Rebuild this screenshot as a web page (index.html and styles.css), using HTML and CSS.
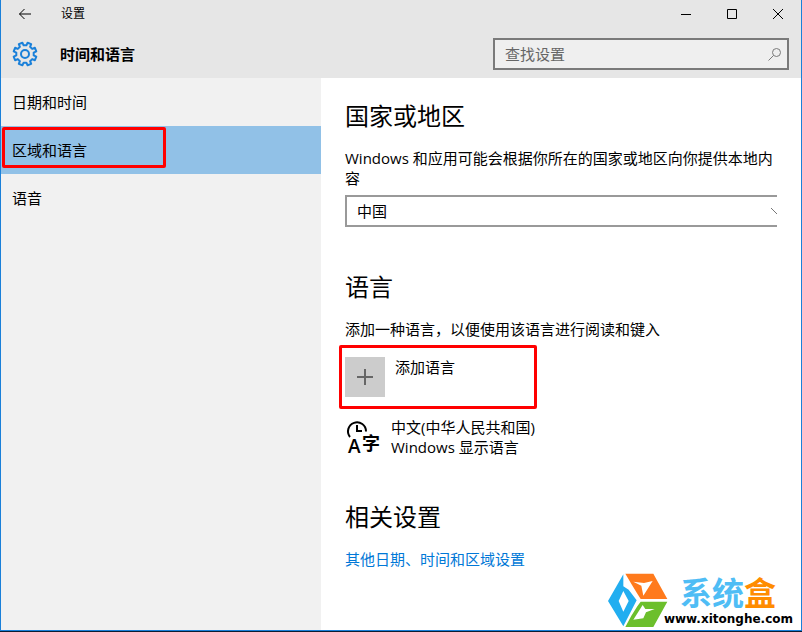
FILE: index.html
```
<!DOCTYPE html>
<html lang="zh-CN">
  <head>
    <meta charset="utf-8" />
    <title>设置</title>
    <meta name="viewport" content="width=device-width, initial-scale=1.0" />
    <link rel="stylesheet" href="styles.css">
  </head>
  <body>
    <div class="window">
      <header class="header">
        <div class="title-bar">
          <button class="icon-btn back" aria-label="返回">
            <svg width="14" height="12" viewBox="0 0 14 12"><path d="M13 6H1.5M6.5 1l-5 5 5 5" /></svg>
          </button>
          <span class="title">设置</span>
          <div class="window-controls">
            <button class="icon-btn" aria-label="最小化">
              <svg width="12" height="12" viewBox="0 0 12 12"><path d="M1 6.5h10" /></svg>
            </button>
            <button class="icon-btn" aria-label="最大化">
              <svg width="12" height="12" viewBox="0 0 12 12"><path d="M1.5 1.5h9v9h-9z" /></svg>
            </button>
            <button class="icon-btn" aria-label="关闭">
              <svg width="12" height="12" viewBox="0 0 12 12"><path d="M1 1l10 10M11 1L1 11" /></svg>
            </button>
          </div>
        </div>
        <div class="page-bar">
          <svg class="gear" width="26" height="26" viewBox="-13 -13 26 26">
            <path d="M1.4-8.7L2.6-11.3 6.2-9.9 5.1-7.2 7.2-5.1 9.9-6.2 11.3-2.6 8.7-1.4V1.4L11.3 2.6 9.9 6.2 7.2 5.1 5.1 7.2 6.2 9.9 2.6 11.3 1.4 8.7H-1.4L-2.6 11.3-6.2 9.9-5.1 7.2-7.2 5.1-9.9 6.2-11.3 2.6-8.7 1.4V-1.4L-11.3-2.6-9.9-6.2-7.2-5.1-5.1-7.2-6.2-9.9-2.6-11.3-1.4-8.7z" />
            <circle r="4" />
          </svg>
          <h1>时间和语言</h1>
          <div class="search">
            <input type="text" id="search" placeholder="查找设置" aria-label="查找设置" />
            <svg width="14" height="14" viewBox="0 0 14 14"><circle cx="8.5" cy="5.5" r="4" /><path d="M5.5 8.5l-5 5" /></svg>
          </div>
        </div>
      </header>

      <div class="body">
        <nav class="sidebar">
          <a href="#">日期和时间</a>
          <a href="#" class="active highlight">区域和语言</a>
          <a href="#">语音</a>
        </nav>

        <main class="content">
          <section>
            <h2>国家或地区</h2>
            <label for="country">Windows 和应用可能会根据你所在的国家或地区向你提供本地内容</label>
            <div class="select-box">
              <select id="country">
                <option>中国</option>
              </select>
              <svg width="6" height="6" viewBox="0 0 6 6"><path d="M0 0l6 6" /></svg>
            </div>
          </section>

          <section>
            <h2>语言</h2>
            <p>添加一种语言，以便使用该语言进行阅读和键入</p>
            <button class="add-language highlight">
              <span class="plus">
                <svg width="16" height="16" viewBox="0 0 16 16"><path d="M8 0v16M0 8h16" /></svg>
              </span>
              <span>添加语言</span>
            </button>
            <div class="language">
              <svg width="36" height="44" viewBox="0 0 36 44">
                <path d="M5 20A9 9 0 1 1 21 14.5" />
                <path d="M12 8v6h5" />
                <text x="3" y="36" class="glyph-a">A</text>
                <text x="17" y="33" class="glyph-zi">字</text>
              </svg>
              <div>
                <p>中文(中华人民共和国)</p>
                <p>Windows 显示语言</p>
              </div>
            </div>
          </section>

          <section>
            <h2>相关设置</h2>
            <a href="#" class="link">其他日期、时间和区域设置</a>
          </section>
        </main>
      </div>

      <div class="watermark">
        <svg width="60" height="56" viewBox="0 0 180 168">
          <path fill="#22aef0" fill-rule="evenodd" d="M0 84L46 4v36L62 50 86 82 46 160zM46 54L32 84l14 32 16-32z" />
          <path fill="#ff7a1c" fill-rule="evenodd" d="M52 2h84l42 76H98L88 62 72 36zM76 26l24 12 6 30 28-44-26 6z" />
          <path fill="#6cbf2c" fill-rule="evenodd" d="M52 162l18-34 18-28 10-14h80l-42 76zM76 140l28-44 8 12h28l-26 10-8 18z" />
        </svg>
        <div>
          <div class="brand">系统<span>盒</span></div>
          <div class="site">www.xitonghe.com</div>
        </div>
      </div>
    </div>
  </body>
</html>
```
FILE: styles.css
```
*,
*::after {
  box-sizing: border-box;
}

body {
  margin: 0;
  background: #0b1d33;
  font-family: "Open Sans", "Noto Sans CJK SC", sans-serif;
  font-size: 15px;
  line-height: 20px;
  color: #000;
}

h1,
h2,
p {
  margin: 0;
}

button,
input,
select {
  font: inherit;
  color: inherit;
}

svg {
  display: block;
  flex-shrink: 0;
  fill: none;
  stroke: #000;
}

.window {
  position: relative;
  display: flex;
  flex-direction: column;
  min-height: calc(100vh - 1px);
  border: 1px solid #1a80d9;
  border-top: none;
  background: #fff;
}

.header {
  height: 78px;
  background: #e6e6e6;
}

.title-bar {
  display: flex;
  align-items: center;
  height: 28px;
}

.title {
  font-size: 12px;
  margin-left: 12px;
}

.icon-btn {
  display: flex;
  align-items: center;
  justify-content: center;
  width: 46px;
  height: 28px;
  padding: 0;
  border: none;
  background: none;
}

.back {
  width: 48px;
}

.window-controls {
  display: flex;
  margin-left: auto;
}

.page-bar {
  display: flex;
  align-items: center;
  height: 52px;
  padding: 0 12px 0 11px;
}

.gear {
  stroke: #1a80d9;
  stroke-width: 2;
  stroke-linejoin: round;
}

h1 {
  margin-left: 22px;
  font-size: 15px;
  font-weight: 700;
}

.search {
  display: flex;
  align-items: center;
  width: 40%;
  max-width: 296px;
  height: 32px;
  margin-left: auto;
  padding: 0 5px 0 10px;
  border: 2px solid #7a7a7a;
  background: #efefef;
}

.search input {
  flex: 1;
  min-width: 0;
  padding: 0;
  border: none;
  outline: none;
  background: none;
}

.search input::placeholder {
  color: #666;
  opacity: 1;
}

.search svg {
  stroke: #7a7a7a;
}

.body {
  display: flex;
  flex: 1;
}

.sidebar {
  width: 40%;
  max-width: 320px;
  background: #f1f1f1;
}

.sidebar a {
  display: flex;
  align-items: center;
  height: 48px;
  padding-left: 11px;
  color: #000;
  text-decoration: none;
}

.sidebar .active {
  background: #91c1e7;
}

/* Red marker boxes */
.highlight {
  position: relative;
}

.highlight::after {
  content: "";
  position: absolute;
  border: 3px solid #f00;
  border-radius: 2px;
}

.sidebar .highlight::after {
  top: 1px;
  left: 1px;
  width: 164px;
  height: 41px;
}

.content {
  flex: 1;
  padding: 22px 24px;
}

section {
  margin-bottom: 44px;
}

section:last-child {
  margin-bottom: 0;
}

h2 {
  margin-bottom: 16px;
  font-size: 24px;
  font-weight: 400;
  line-height: 32px;
}

label {
  display: block;
}

.select-box {
  position: relative;
  margin-top: 7px;
}

.select-box select {
  display: block;
  width: 100%;
  height: 32px;
  padding: 0 10px;
  border: 2px solid #999;
  border-right: none;
  border-radius: 0;
  background: #fff;
  appearance: none;
}

.select-box svg {
  position: absolute;
  top: 13px;
  right: 0;
  stroke: #777;
}

.add-language {
  display: flex;
  gap: 10px;
  margin-top: 18px;
  padding: 0;
  border: none;
  background: none;
  text-align: left;
}

.add-language::after {
  top: -12px;
  left: -6px;
  width: 198px;
  height: 64px;
}

.plus {
  display: flex;
  align-items: center;
  justify-content: center;
  width: 40px;
  height: 40px;
  background: #ccc;
}

.plus svg {
  stroke: #666;
  stroke-width: 2;
}

.language {
  display: flex;
  align-items: flex-start;
  gap: 10px;
  margin-top: 20px;
}

.language svg {
  margin-bottom: -4px;
  stroke-width: 2;
}

.language text {
  fill: #000;
  stroke: none;
}

.glyph-a {
  font-size: 19px;
  font-weight: 600;
}

.glyph-zi {
  font-size: 18px;
  font-weight: 700;
}

.link {
  color: #0078d7;
  text-decoration: none;
}

.watermark {
  position: absolute;
  right: 8px;
  bottom: 1px;
  display: flex;
  align-items: center;
}

.watermark svg {
  margin-right: -4px;
  stroke: none;
}

.brand {
  padding-left: 16px;
  font-size: 32px;
  font-weight: 700;
  line-height: 36px;
  color: #4fbdf5;
}

.brand span {
  color: #ff8c00;
}

.site {
  font-family: "DejaVu Sans", sans-serif;
  font-size: 12px;
  font-weight: 700;
  line-height: 16px;
}
```
